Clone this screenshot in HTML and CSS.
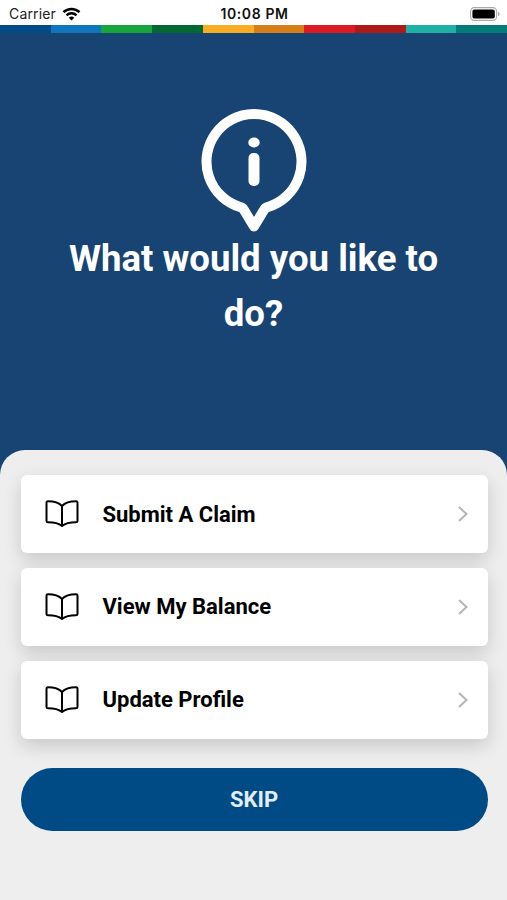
FILE: index.html
```
<!DOCTYPE html>
<html lang="en">
<head>
  <meta charset="UTF-8" />
  <meta name="viewport" content="width=device-width, initial-scale=1.0"/>
  <title>What would you like to do?</title>
  <link rel="stylesheet" href="styles.css">
</head>
<body>

<!-- Status bar -->
<div class="status-bar">
  <div class="carrier">
    <span>Carrier</span>
    <svg class="wifi" viewBox="0 0 18 14" fill="none" stroke="#000" stroke-width="2.5">
      <path d="M1 5.2a11.4 11.4 0 0 1 16 0"/>
      <path d="M4 8.3a7.2 7.2 0 0 1 10 0"/>
      <path d="M6.3 10.8a3.9 3.9 0 0 1 5.4 0L9 13.6z" fill="#000" stroke="none"/>
    </svg>
  </div>
  <div class="time">10:08 PM</div>
  <div class="status-right">
    <svg class="battery" viewBox="0 0 30 14">
      <rect x=".6" y=".6" width="26" height="12.8" rx="3.8" fill="#fff" stroke="#aaa" stroke-width="1.1"/>
      <rect x="2.4" y="2.4" width="22.4" height="9.2" rx="2" fill="#000"/>
      <path d="M28 4.8c2.2.8 2.2 3.6 0 4.4z" fill="#aaa"/>
    </svg>
  </div>
</div>

<!-- Color strip -->
<div class="strip">
  <span class="navy"></span>
  <span class="blue"></span>
  <span class="green"></span>
  <span class="dark-green"></span>
  <span class="yellow"></span>
  <span class="orange"></span>
  <span class="red"></span>
  <span class="dark-red"></span>
  <span class="teal"></span>
  <span class="dark-teal"></span>
</div>

<!-- Header -->
<div class="hero">
  <svg class="info-icon" viewBox="0 0 106 124" fill="none" stroke="#fff" stroke-width="10" stroke-linejoin="round" stroke-linecap="round">
    <path d="M39 98A47.500 47.500 0 1 1 67 98Q64.500 98.500 63 101L53 117.500L43 101Q41.500 98.500 39 98Z"/>
    <ellipse cx="53" cy="33.500" rx="5.700" ry="5" fill="#fff" stroke="none"/>
    <rect x="47.500" y="44" width="11" height="33" rx="5" fill="#fff" stroke="none"/>
  </svg>
  <h1>What would you like to do?</h1>
</div>

<!-- Options -->
<div class="sheet">
  <a class="card" href="#">
    <svg class="book" viewBox="0 0 34 28">
      <path d="M17 6Q12.500 1.300 3 1.300Q1.500 1.300 1.500 2.800V21Q1.500 22.300 3 22.300Q12.500 22.300 17 26Q21.500 22.300 31 22.300Q32.500 22.300 32.500 21V2.800Q32.500 1.300 31 1.300Q21.500 1.300 17 6V26"/>
    </svg>
    <span class="label">Submit A Claim</span>
    <svg class="chevron" viewBox="0 0 12 18"><path d="M2 2l7.500 7L2 16"/></svg>
  </a>
  <a class="card" href="#">
    <svg class="book" viewBox="0 0 34 28">
      <path d="M17 6Q12.500 1.300 3 1.300Q1.500 1.300 1.500 2.800V21Q1.500 22.300 3 22.300Q12.500 22.300 17 26Q21.500 22.300 31 22.300Q32.500 22.300 32.500 21V2.800Q32.500 1.300 31 1.300Q21.500 1.300 17 6V26"/>
    </svg>
    <span class="label">View My Balance</span>
    <svg class="chevron" viewBox="0 0 12 18"><path d="M2 2l7.500 7L2 16"/></svg>
  </a>
  <a class="card" href="#">
    <svg class="book" viewBox="0 0 34 28">
      <path d="M17 6Q12.500 1.300 3 1.300Q1.500 1.300 1.500 2.800V21Q1.500 22.300 3 22.300Q12.500 22.300 17 26Q21.500 22.300 31 22.300Q32.500 22.300 32.500 21V2.800Q32.500 1.300 31 1.300Q21.500 1.300 17 6V26"/>
    </svg>
    <span class="label">Update Profile</span>
    <svg class="chevron" viewBox="0 0 12 18"><path d="M2 2l7.500 7L2 16"/></svg>
  </a>
  <button class="skip-btn">SKIP</button>
</div>

</body>
</html>
```
FILE: styles.css
```
* {
  box-sizing: border-box;
}

body {
  font-family: Roboto, sans-serif;
  margin: 0;
  height: 100vh;
  display: flex;
  flex-direction: column;
  background-color: #174472;
  overflow: hidden;
}

.status-bar {
  display: grid;
  grid-template-columns: 1fr auto 1fr;
  align-items: center;
  height: 25px;
  padding: 2px 7px 0 9px;
  background-color: #fff;
  font-family: Inter, sans-serif;
  font-size: 14px;
  color: #222;
}

.carrier {
  display: flex;
  align-items: center;
  gap: 6px;
  letter-spacing: 0.15px;
}

.wifi {
  width: 19px;
  height: 14px;
}

.time {
  font-weight: 600;
  letter-spacing: 0.6px;
  color: #111;
}

.status-right {
  display: flex;
  justify-content: flex-end;
}

.battery {
  width: 30px;
  height: 14px;
}

.strip {
  display: flex;
  height: 8px;
}

.strip span {
  flex: 1;
}

.navy { background-color: #004b85; }
.blue { background-color: #0f75bd; }
.green { background-color: #16a63c; }
.dark-green { background-color: #006830; }
.yellow { background-color: #f9ad22; }
.orange { background-color: #d47f18; }
.red { background-color: #dd1a22; }
.dark-red { background-color: #ae1a17; }
.teal { background-color: #1fb1a6; }
.dark-teal { background-color: #007c7b; }

.hero {
  height: 417px;
  padding: 76px 60px 0;
  text-align: center;
}

.info-icon {
  display: block;
  width: 106px;
  height: 124px;
  margin: 0 auto;
}

h1 {
  margin: -2px 0 0;
  color: #fff;
  font-size: 36.6px;
  font-weight: 700;
  line-height: 55px;
}

.sheet {
  flex: 1;
  display: flex;
  flex-direction: column;
  gap: 14.5px;
  padding: 25px 19.5px 0 20.5px;
  background-color: #eee;
  border-radius: 25px 25px 0 0;
}

.card {
  display: flex;
  align-items: center;
  height: 78.3px;
  padding: 0 19px 0 24px;
  background-color: #fff;
  border-radius: 6px;
  box-shadow: 0 7px 18px rgba(0, 0, 0, 0.16);
  color: #000;
  text-decoration: none;
}

.book {
  width: 34px;
  height: 28px;
  fill: none;
  stroke: #000;
  stroke-width: 2;
  stroke-linejoin: round;
}

.label {
  flex: 1;
  margin-left: 24px;
  font-size: 22px;
  font-weight: 700;
}

.chevron {
  width: 12px;
  height: 18px;
  fill: none;
  stroke: #b5b5b5;
  stroke-width: 2;
}

.skip-btn {
  height: 63.5px;
  margin-top: 14.5px;
  border: none;
  border-radius: 32px;
  background-color: #004b85;
  color: #e4edf5;
  font-family: inherit;
  font-size: 22px;
  font-weight: 700;
  cursor: pointer;
}
```
